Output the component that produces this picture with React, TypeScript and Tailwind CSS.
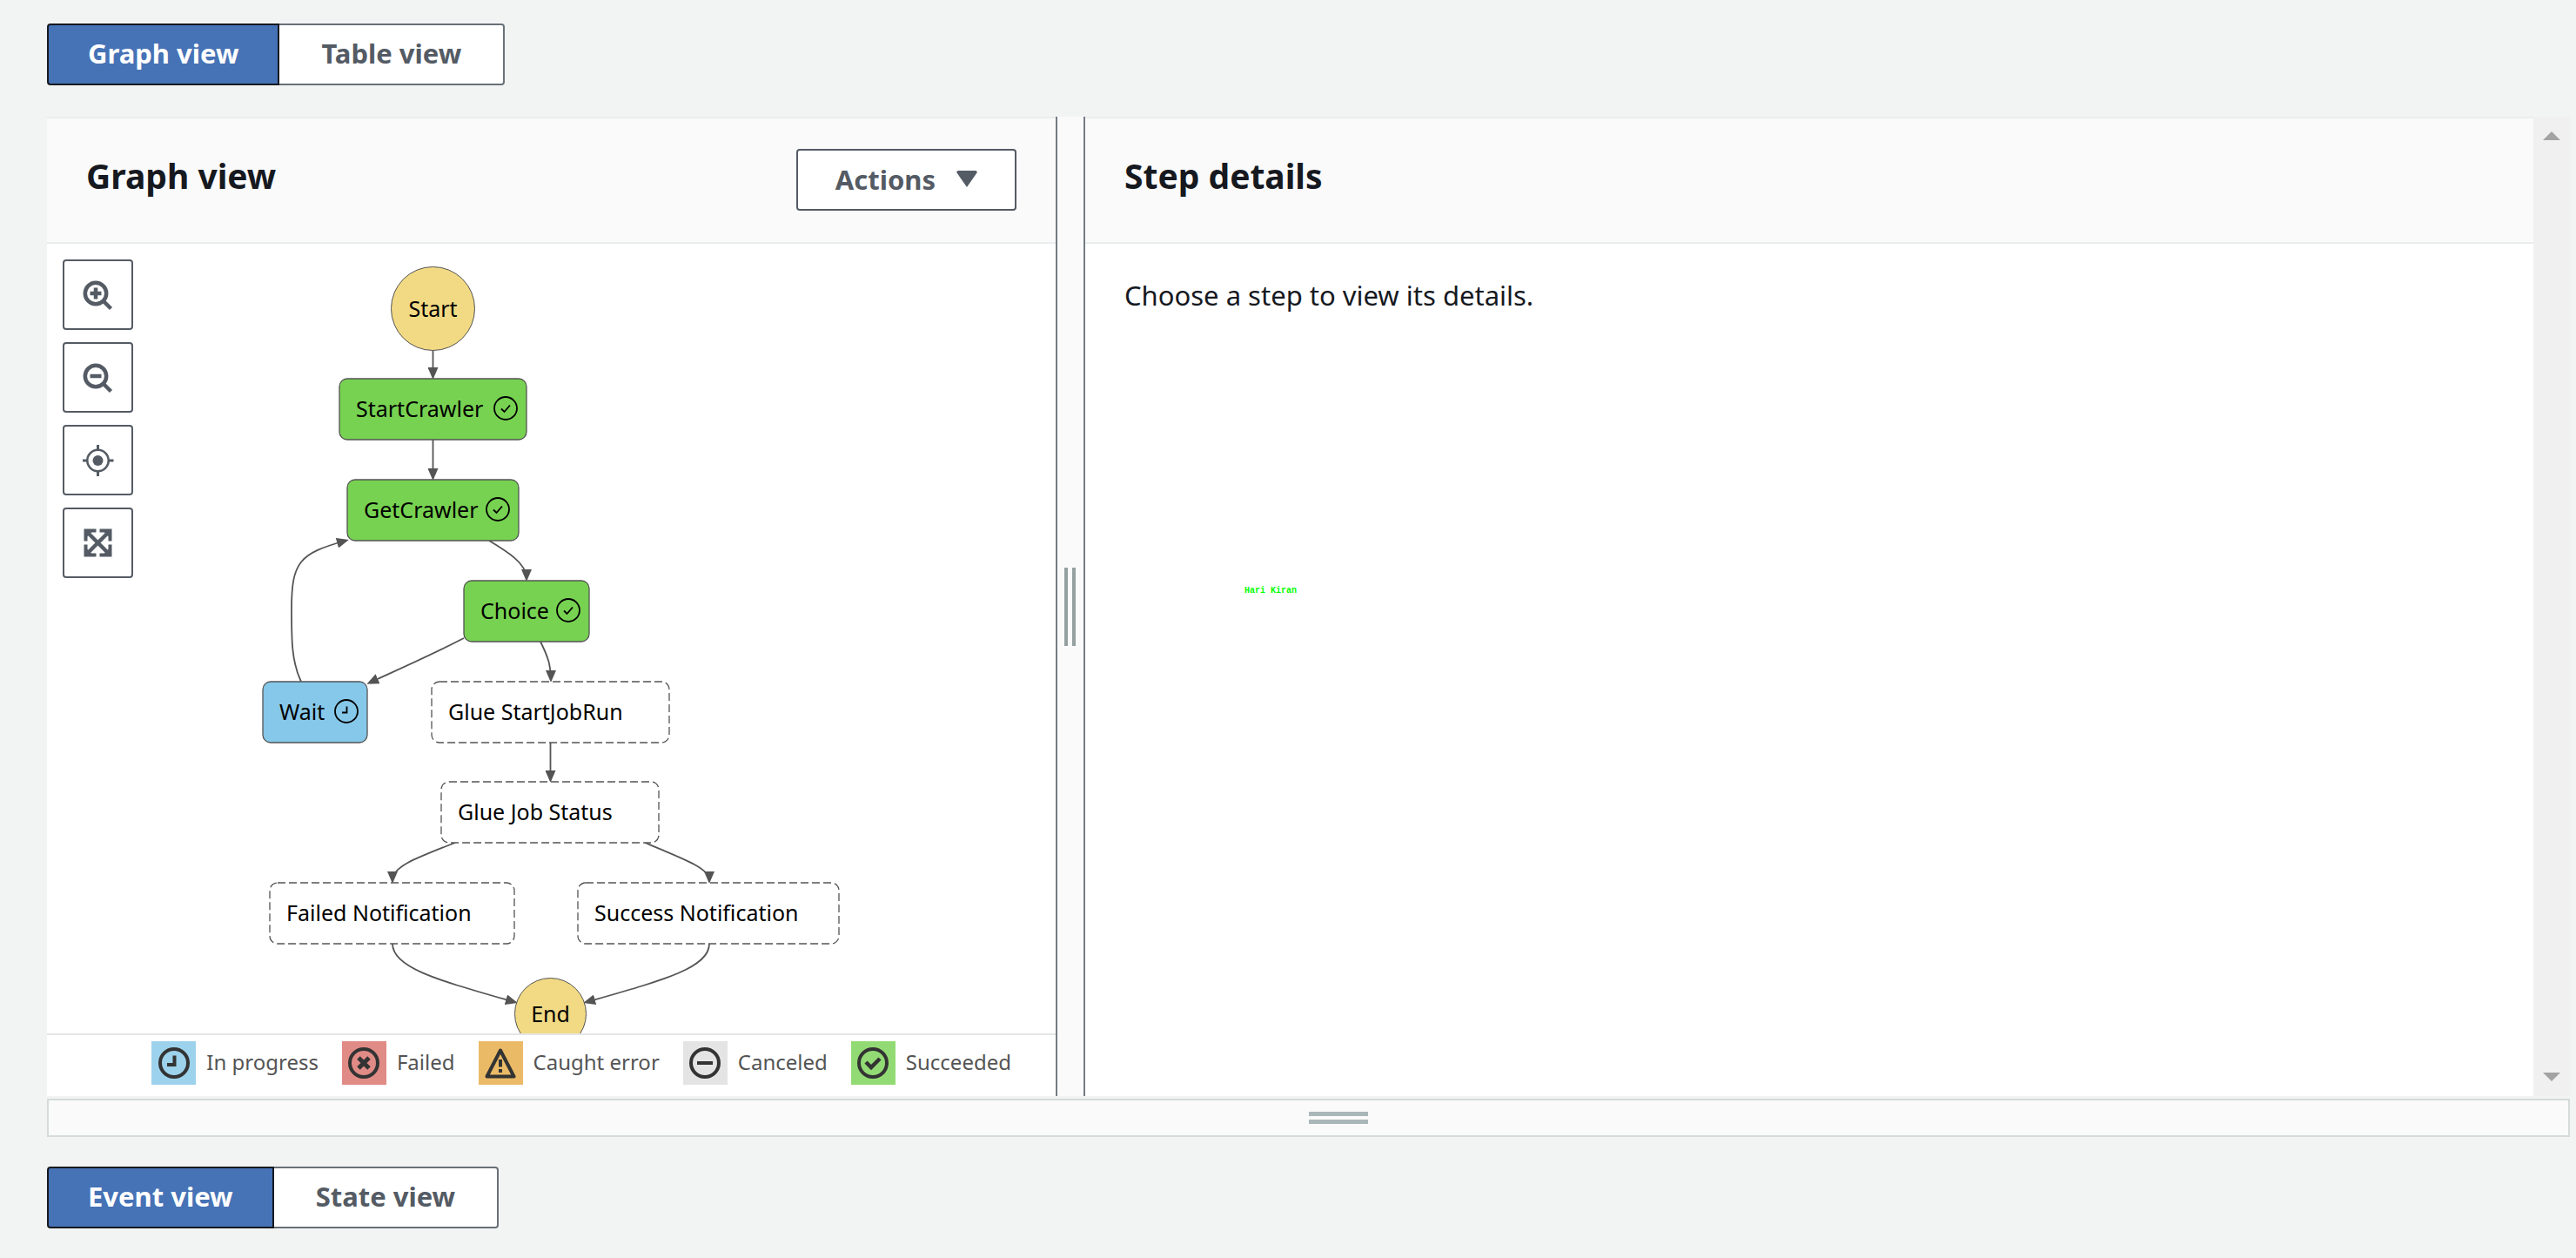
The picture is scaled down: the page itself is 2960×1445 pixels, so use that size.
import React, { type ReactNode } from "react";

type Status = "idle" | "running" | "done";

interface StepNode {
  label: string;
  status: Status;
  box: string;
}

const steps: StepNode[] = [
  { label: "StartCrawler", status: "done", box: "left-[336px] top-[155px] w-[215px]" },
  { label: "GetCrawler", status: "done", box: "left-[345px] top-[271px] w-[197px]" },
  { label: "Choice", status: "done", box: "left-[479px] top-[387px] w-[144px]" },
  { label: "Wait", status: "running", box: "left-[248px] top-[503px] w-[120px]" },
  { label: "Glue StartJobRun", status: "idle", box: "left-[442px] top-[503px] w-[273px]" },
  { label: "Glue Job Status", status: "idle", box: "left-[453px] top-[618px] w-[250px]" },
  { label: "Failed Notification", status: "idle", box: "left-[256px] top-[734px] w-[281px]" },
  { label: "Success Notification", status: "idle", box: "left-[610px] top-[734px] w-[300px]" },
];

const edges: string[] = [
  "M443.500 122V152",
  "M443.500 225V268",
  "M508 341C528 353 551 367 551 384",
  "M479 453C440 473 408 487 371 504",
  "M567 457C576 475 579 485 579 500",
  "M292 503C281 480 281 455 281 420C281 365 290 356 343 341",
  "M578.500 573V615",
  "M469 688C420 707 397 716 397 731",
  "M687 688C738 709 761 718 761 731",
  "M397 804C397 832 450 846 537 871",
  "M761 804C761 832 708 846 620 871",
];

const shapeFill: Record<Status, string> = {
  idle: "fill-white",
  running: "fill-[#86c8e9]",
  done: "fill-[#77d251]",
};

function StatusIcon({ status }: { status: Status }) {
  if (status === "idle") return null;
  return (
    <svg viewBox="0 0 28 28" className="ml-auto size-7 shrink-0 fill-none stroke-black" aria-hidden="true">
      <circle cx="14" cy="14" r="13" strokeWidth="1.8" />
      {status === "done" ? (
        <path d="M9 14.500L12.500 18L19 10.500" strokeWidth="1.8" />
      ) : (
        <path d="M14.500 8.500V15.500H9" strokeWidth="1.8" />
      )}
    </svg>
  );
}

function Step({ step }: { step: StepNode }) {
  return (
    <button type="button" className={`absolute flex h-[70px] items-center pb-[2px] pl-[19px] pr-[10px] ${step.box}`}>
      <svg className="absolute inset-0 h-full w-full overflow-visible" aria-hidden="true">
        <rect
          width="100%"
          height="100%"
          rx="9"
          className={`stroke-[#545454] ${shapeFill[step.status]}`}
          strokeWidth="1.3"
          strokeDasharray={step.status === "idle" ? "9 4" : undefined}
        />
      </svg>
      <span className="relative whitespace-nowrap">{step.label}</span>
      <span className="relative ml-auto">
        <StatusIcon status={step.status} />
      </span>
    </button>
  );
}

function Terminal({ label, box }: { label: string; box: string }) {
  return (
    <div className={`absolute flex items-center justify-center rounded-full border border-[#545454] bg-[#f2da84] pb-[2px] ${box}`}>
      {label}
    </div>
  );
}

function Graph() {
  return (
    <div className="absolute inset-0 text-[25px] leading-8 text-black">
      <svg className="absolute inset-0 h-full w-full fill-none stroke-[#545454]" strokeWidth="1.8" aria-hidden="true">
        <defs>
          <marker id="arrow" viewBox="0 0 14 12" refX="10" refY="6" markerWidth="14" markerHeight="12" markerUnits="userSpaceOnUse" orient="auto">
            <path d="M0 0L14 6L0 12Z" className="fill-[#545454] stroke-none" />
          </marker>
        </defs>
        {edges.map((d) => (
          <path key={d} d={d} markerEnd="url(#arrow)" />
        ))}
      </svg>
      <Terminal label="Start" box="left-[395px] top-[26px] size-[97px]" />
      {steps.map((s) => (
        <Step key={s.label} step={s} />
      ))}
      <Terminal label="End" box="left-[537px] top-[843px] size-[83px]" />
    </div>
  );
}

function ToolButton({ label, children }: { label: string; children: ReactNode }) {
  return (
    <button type="button" aria-label={label} className="flex size-[81px] items-center justify-center rounded-[4px] border-2 border-[#545b64] bg-white">
      <svg viewBox="0 0 36 36" className="size-9 fill-none stroke-[#545b64]" aria-hidden="true">
        {children}
      </svg>
    </button>
  );
}

function Toolbar() {
  return (
    <div className="relative flex w-fit flex-col gap-[14px] pl-[18px] pt-[18px]">
      <ToolButton label="Zoom in">
        <circle cx="15" cy="16" r="12.200" strokeWidth="4.500" />
        <path d="M24 25L32.500 33.500" strokeWidth="4.500" />
        <path d="M8.500 16H21.500M15 9.500V22.500" strokeWidth="4.500" />
      </ToolButton>
      <ToolButton label="Zoom out">
        <circle cx="15" cy="16" r="12.200" strokeWidth="4.500" />
        <path d="M24 25L32.500 33.500" strokeWidth="4.500" />
        <path d="M8.500 16H21.500" strokeWidth="4.500" />
      </ToolButton>
      <ToolButton label="Center graph">
        <circle cx="17.500" cy="18" r="12.200" strokeWidth="2.500" />
        <circle cx="17.500" cy="18" r="6" className="fill-[#545b64] stroke-none" />
        <path d="M17.500 0V6M17.500 30V36M0 18H6M29 18H35.500" strokeWidth="3" />
      </ToolButton>
      <ToolButton label="Fit to view">
        <path d="M5 5L30 30M30 5L5 30" strokeWidth="4.500" />
        <path d="M15.500 3.500H3.500V15.500M19.500 3.500H31.500V15.500M15.500 31.500H3.500V19.500M19.500 31.500H31.500V19.500" strokeWidth="4" />
        <path d="M3.500 3.500H12L3.500 12ZM31.500 3.500H23L31.500 12ZM3.500 31.500H12L3.500 23ZM31.500 31.500H23L31.500 23Z" className="fill-[#545b64] stroke-none" />
      </ToolButton>
    </div>
  );
}

const legend: { label: string; tile: string; icon: ReactNode }[] = [
  {
    label: "In progress",
    tile: "bg-[#9dd2ec]",
    icon: (
      <>
        <circle cx="18" cy="18" r="16" />
        <path d="M18.500 9.500V20H10" />
      </>
    ),
  },
  {
    label: "Failed",
    tile: "bg-[#e08b86]",
    icon: (
      <>
        <circle cx="18" cy="18" r="16" />
        <path d="M12 12L24 24M24 12L12 24" strokeWidth="5" />
      </>
    ),
  },
  {
    label: "Caught error",
    tile: "bg-[#ebba67]",
    icon: (
      <>
        <path d="M18 3.500L33.500 33.500H2.500Z" strokeLinejoin="round" />
        <path d="M18 14V22.500M18 25V29" />
      </>
    ),
  },
  {
    label: "Canceled",
    tile: "bg-[#e4e4e4]",
    icon: (
      <>
        <circle cx="18" cy="18" r="16" />
        <path d="M9 18H27" />
      </>
    ),
  },
  {
    label: "Succeeded",
    tile: "bg-[#92db74]",
    icon: (
      <>
        <circle cx="18" cy="18" r="16" />
        <path d="M10 17L16 23L26 13" strokeWidth="4.500" />
      </>
    ),
  },
];

function Legend() {
  return (
    <ul className="flex h-[72px] items-start justify-end gap-[27px] border-t-2 border-[#e4e6e6] pr-[51px] pt-[7px]">
      {legend.map((item) => (
        <li key={item.label} className="flex items-center gap-3">
          <span className={`flex h-[50px] w-[51px] items-center justify-center ${item.tile}`}>
            <svg viewBox="0 0 36 36" className="size-9 fill-none stroke-[#333333]" strokeWidth="4" aria-hidden="true">
              {item.icon}
            </svg>
          </span>
          <span className="whitespace-nowrap pb-[2px] text-[24px] leading-8 text-[#545454]">{item.label}</span>
        </li>
      ))}
    </ul>
  );
}

function Segmented({ label, options }: { label: string; options: [string, string] }) {
  return (
    <div role="group" aria-label={label} className="flex text-[31px] font-bold leading-10">
      <button type="button" aria-pressed="true" className="h-[71px] rounded-l-[4px] border-2 border-[#16191f] bg-[#4672b6] px-[45px] pb-[3px] text-white">
        {options[0]}
      </button>
      <button type="button" aria-pressed="false" className="h-[71px] rounded-r-[4px] border-2 border-l-0 border-[#687078] bg-white px-[48px] pb-[3px] text-[#545b64]">
        {options[1]}
      </button>
    </div>
  );
}

function PanelHeader({ title, children }: { title: string; children?: ReactNode }) {
  return (
    <header className="flex h-[146px] shrink-0 items-start justify-between border-y-2 border-[#eaeded] bg-[#fafafa] px-[45px] pt-[35px]">
      <h2 className="whitespace-nowrap text-[39px] font-bold leading-[62px] text-[#16191f]">{title}</h2>
      {children}
    </header>
  );
}

export default function App() {
  return (
    <main className="flex min-h-screen flex-col bg-[#f2f4f3] pb-8 pl-[54px] pr-[7px] pt-[27px] font-['Noto_Sans',sans-serif] text-[#16191f]">
      <Segmented label="Execution view" options={["Graph view", "Table view"]} />

      <div className="mt-9 flex h-[1125px]">
        <section className="flex w-2/5 max-w-[1159px] flex-col bg-white">
          <PanelHeader title="Graph view">
            <button type="button" className="flex h-[71px] items-center gap-6 rounded-[4px] border-2 border-[#545b64] bg-white px-[43px] pb-[2px] text-[31px] font-bold leading-10 text-[#545b64]">
              Actions
              <svg viewBox="0 0 24 19" className="h-[19px] w-6 fill-current" aria-hidden="true">
                <path d="M2 0H22Q24 0 23.500 2.500L12 19L0.500 2.500Q0 0 2 0Z" />
              </svg>
            </button>
          </PanelHeader>
          <div className="relative min-h-0 flex-1 overflow-hidden">
            <Graph />
            <Toolbar />
          </div>
          <Legend />
        </section>

        <div role="separator" aria-orientation="vertical" className="flex w-[34px] shrink-0 items-center justify-center gap-[5px] border-x-2 border-[#757d85] bg-[#fafafa] pr-[2px]">
          <span className="h-[90px] w-1 bg-[#95a0a0]" />
          <span className="h-[90px] w-1 bg-[#95a0a0]" />
        </div>

        <section className="relative flex min-w-0 flex-1 flex-col bg-white">
          <PanelHeader title="Step details" />
          <p className="px-[45px] pt-[39px] text-[31px] leading-10">Choose a step to view its details.</p>
          <span className="absolute left-[183px] top-[539px] font-['Liberation_Mono',monospace] text-[10px] font-bold leading-3 text-[#00ff00]">Hari Kiran</span>
        </section>

        <div className="flex w-[42px] shrink-0 flex-col items-center justify-between bg-[#f0f0f0] py-[17px]" aria-hidden="true">
          <svg viewBox="0 0 20 10" className="h-[10px] w-5 fill-[#a3a3a3]"><path d="M10 0L20 10H0Z" /></svg>
          <svg viewBox="0 0 20 10" className="h-[10px] w-5 fill-[#a3a3a3]"><path d="M0 0H20L10 10Z" /></svg>
        </div>
      </div>

      <div role="separator" aria-orientation="horizontal" className="mt-[3px] flex h-11 flex-col items-center justify-center gap-1 border-2 border-[#d5dbdb] bg-[#fafafa] pl-[69px]">
        <span className="h-[5px] w-[68px] bg-[#aab7b8]" />
        <span className="h-[5px] w-[68px] bg-[#aab7b8]" />
      </div>

      <div className="mt-[34px]">
        <Segmented label="History view" options={["Event view", "State view"]} />
      </div>
    </main>
  );
}
